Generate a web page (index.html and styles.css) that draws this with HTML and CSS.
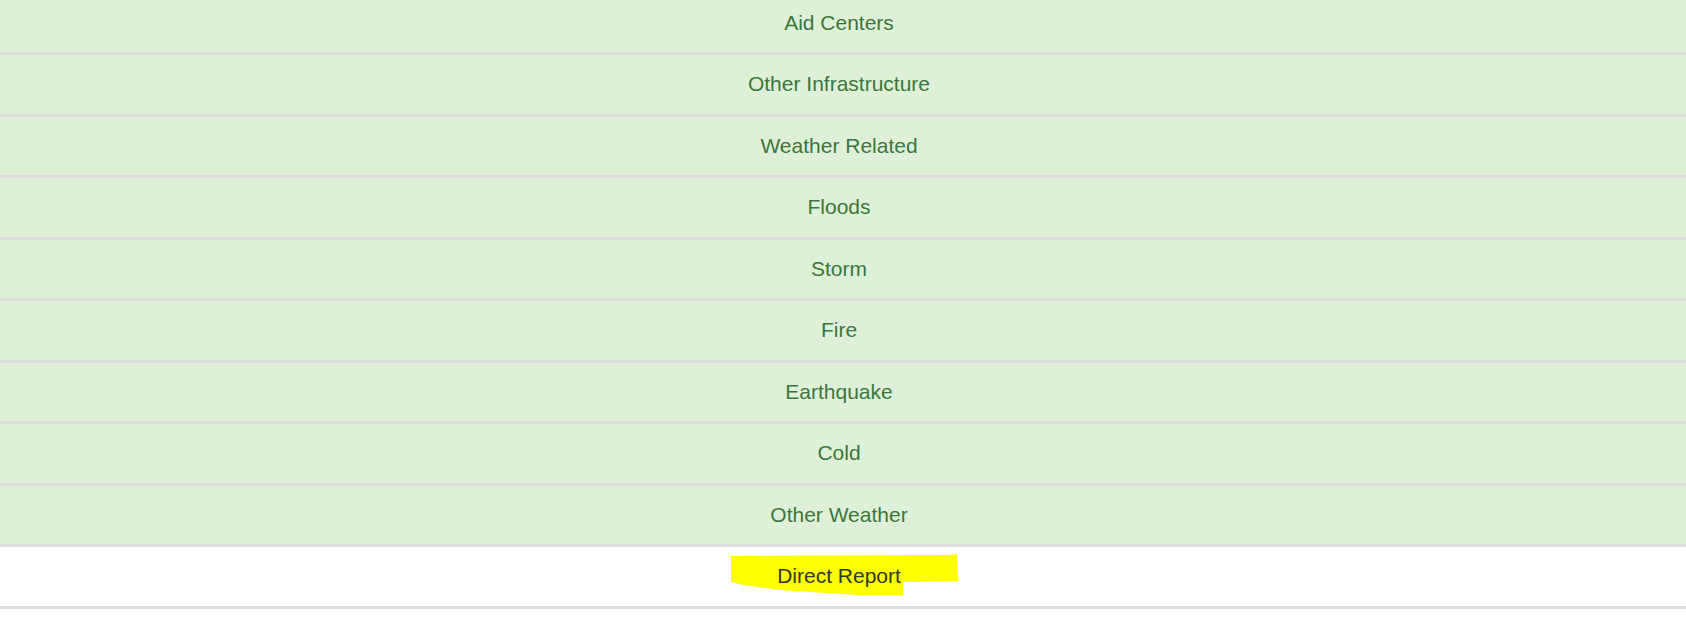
FILE: index.html
```html
<!DOCTYPE html>
<html>
<head>
<meta charset="utf-8">
<link rel="stylesheet" href="styles.css">
</head>
<body>
<div class="list">
  <div class="item success">Aid Centers</div>
  <div class="item success">Other Infrastructure</div>
  <div class="item success">Weather Related</div>
  <div class="item success">Floods</div>
  <div class="item success">Storm</div>
  <div class="item success">Fire</div>
  <div class="item success">Earthquake</div>
  <div class="item success">Cold</div>
  <div class="item success">Other Weather</div>
  <div class="item plain">
    <svg class="marker" width="228" height="42" viewBox="0 0 228 42">
      <polygon points="0,2 216,1 226,0 227,27 172,28 172,41 127,41 49,36 12,31 0,28" fill="#ffff00"/>
    </svg>
    <span class="label">Direct Report</span>
  </div>
</div>
</body>
</html>
```

FILE: styles.css
```css
html, body {
  margin: 0;
  padding: 0;
  background: #ffffff;
}
body {
  font-family: "Liberation Sans", Arial, sans-serif;
  font-size: 21px;
  overflow: hidden;
}
.list {
  margin-top: -6.5px;
  box-shadow: 0 1.5px 3px rgba(0, 0, 0, 0.08);
}
.item {
  padding: 14px 23px 14.5px 15px;
  line-height: 30px;
  text-align: center;
  border-bottom: 3px solid #dddddd;
}
.success {
  background: #dff0d8;
  color: #3c763d;
}
.plain {
  position: relative;
  background: #ffffff;
  color: #2f3a1f;
  padding-top: 13.5px;
  padding-bottom: 15.5px;
}
.marker {
  position: absolute;
  left: 50%;
  margin-left: -112px;
  top: 7px;
}
.label {
  position: relative;
}
```
